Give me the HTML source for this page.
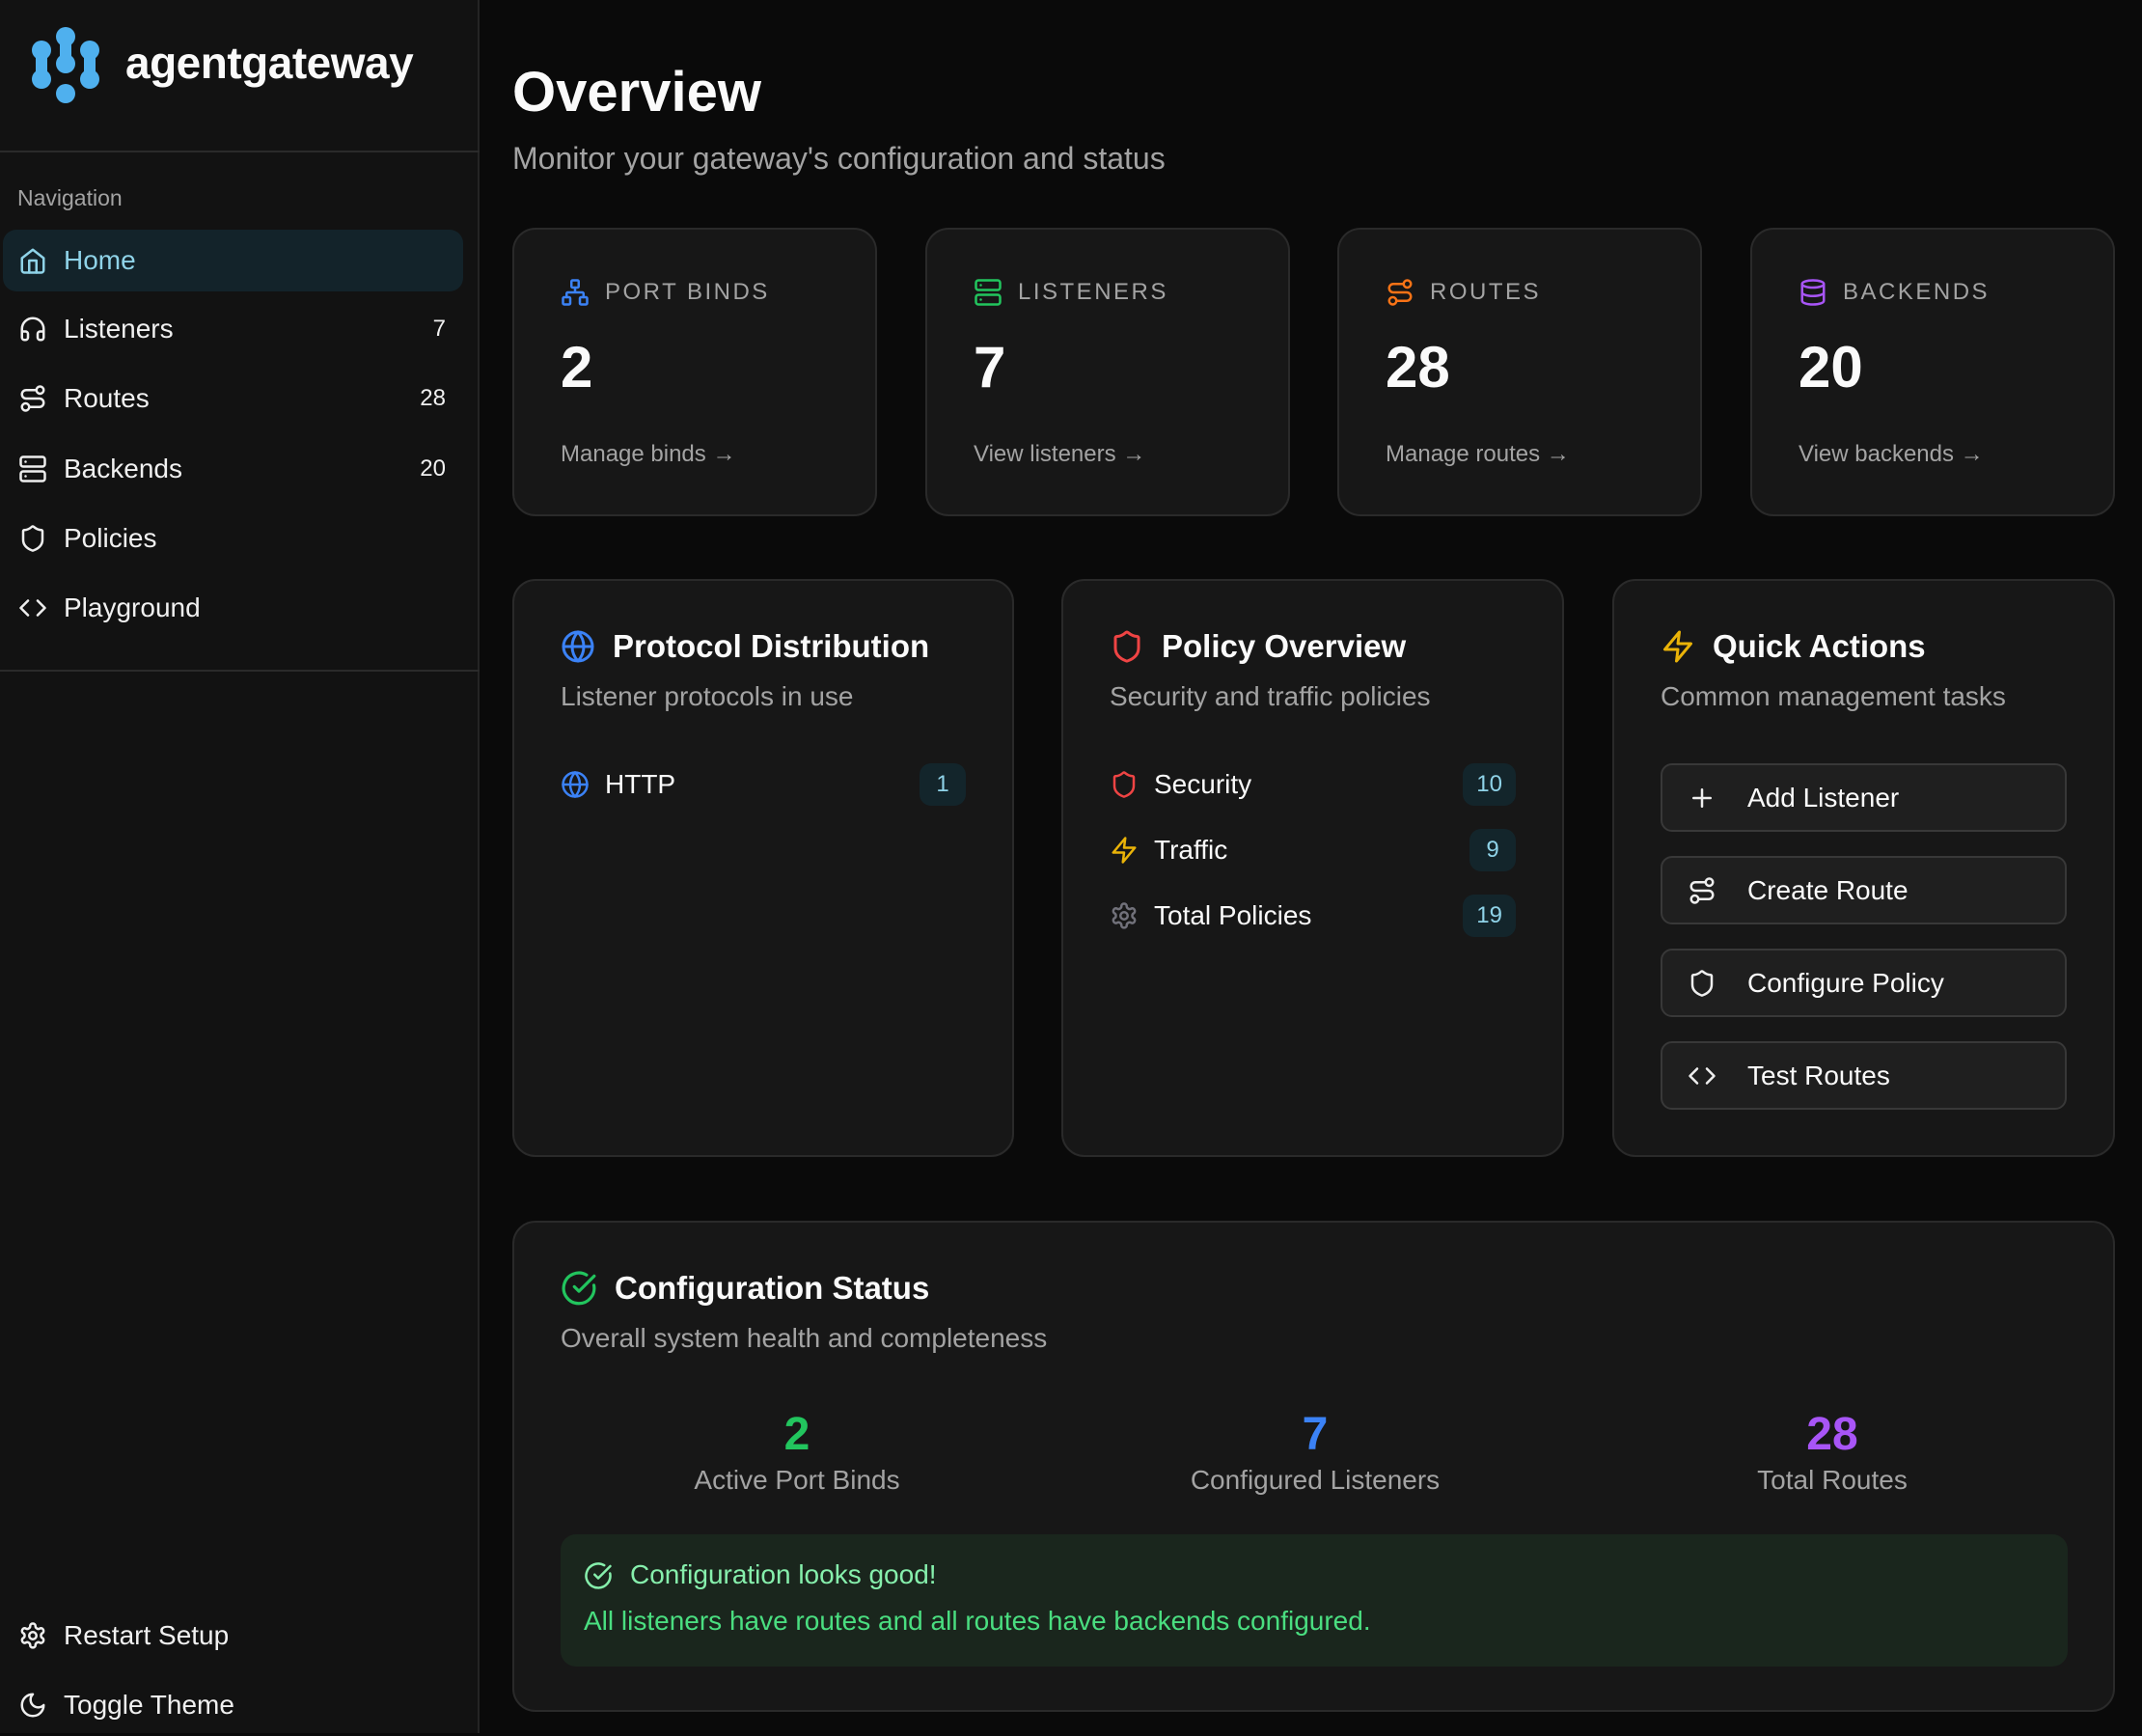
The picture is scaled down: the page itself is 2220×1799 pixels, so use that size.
<!DOCTYPE html>
<html><head><meta charset="utf-8">
<style>
*{box-sizing:border-box;margin:0;padding:0}
body{width:2220px;height:1796px;background:#0a0a0a;font-family:"Liberation Sans",sans-serif;color:#fafafa;position:relative;overflow:hidden}
.abs{position:absolute}
.side{left:0;top:0;width:497px;height:1796px;background:#121212;border-right:2px solid #242424}
.hr{position:absolute;left:0;width:497px;height:2px;background:#2a2a2a}
.nav{position:absolute;left:3px;width:477px;height:64px;display:flex;align-items:center;font-size:28px;color:#f0f0f0}
.nav svg{position:absolute;left:16px}
.nav .t{position:absolute;left:63px}
.nav .c{position:absolute;right:18px;font-size:24px}
.card{position:absolute;background:#171717;border:2px solid #2a2a2a;border-radius:24px}
.lbl{position:absolute;left:48px;top:50px;font-size:24px;letter-spacing:2.5px;color:#a3a3a3;display:flex;align-items:center;gap:16px}
.num{position:absolute;left:48px;top:108px;font-size:60px;font-weight:bold}
.lnk{position:absolute;left:48px;top:219px;font-size:24px;color:#a3a3a3}
.ttl{position:absolute;left:48px;top:49px;font-size:33px;font-weight:bold;display:flex;align-items:center;gap:18px}
.sub{position:absolute;left:48px;top:104px;font-size:28px;color:#a3a3a3}
.row{position:absolute;left:48px;right:48px;height:48px;display:flex;align-items:center;font-size:28px}
.row .t{margin-left:16px}
.badge{position:absolute;right:0;height:44px;min-width:48px;padding:0 14px;border-radius:12px;background:#13252b;color:#8fd3e8;font-size:24px;display:flex;align-items:center;justify-content:center}
.btn{position:absolute;left:48px;width:421px;height:71px;border:2px solid #383838;border-radius:12px;background:#1f1f1f;display:flex;align-items:center;font-size:28px}
.btn svg{position:absolute;left:26px}
.btn .t{position:absolute;left:88px}
svg{fill:none;stroke-width:2;stroke-linecap:round;stroke-linejoin:round}
</style></head><body>

<div class="abs side">
  <svg class="abs" style="left:33px;top:28px" width="72" height="80" viewBox="0 0 72 80">
    <g fill="#4fb0ee" stroke="none">
      <circle cx="10" cy="24" r="10"/><circle cx="10" cy="54" r="10"/><rect x="4" y="24" width="12" height="30"/>
      <circle cx="35" cy="10" r="10"/><circle cx="35" cy="38" r="10"/><rect x="29" y="10" width="12" height="28"/>
      <circle cx="60" cy="24" r="10"/><circle cx="60" cy="54" r="10"/><rect x="54" y="24" width="12" height="30"/>
      <circle cx="35" cy="69" r="10"/>
    </g>
  </svg>
  <div class="abs" style="left:130px;top:38px;font-size:46px;font-weight:bold;letter-spacing:-0.5px">agentgateway</div>
  <div class="hr" style="top:156px"></div>
  <div class="abs" style="left:18px;top:192px;font-size:23px;color:#a3a3a3">Navigation</div>

  <div class="nav" style="top:238px;background:#13232a;border-radius:14px;color:#8fd3e8">
    <svg width="30" height="30" viewBox="0 0 24 24" stroke="#8fd3e8"><path d="M3 10l9-7 9 7v10a2 2 0 0 1-2 2H5a2 2 0 0 1-2-2z"/><path d="M9 22V12h6v10"/></svg>
    <span class="t">Home</span></div>
  <div class="nav" style="top:309px">
    <svg width="30" height="30" viewBox="0 0 24 24" stroke="#eee"><path d="M3 14h3a2 2 0 0 1 2 2v3a2 2 0 0 1-2 2H5a2 2 0 0 1-2-2v-7a9 9 0 0 1 18 0v7a2 2 0 0 1-2 2h-1a2 2 0 0 1-2-2v-3a2 2 0 0 1 2-2h3"/></svg>
    <span class="t">Listeners</span><span class="c">7</span></div>
  <div class="nav" style="top:381px">
    <svg width="30" height="30" viewBox="0 0 24 24" stroke="#eee"><circle cx="6" cy="19" r="3"/><path d="M9 19h8.5a3.5 3.5 0 0 0 0-7h-11a3.5 3.5 0 0 1 0-7H15"/><circle cx="18" cy="5" r="3"/></svg>
    <span class="t">Routes</span><span class="c">28</span></div>
  <div class="nav" style="top:454px">
    <svg width="30" height="30" viewBox="0 0 24 24" stroke="#eee"><rect x="2" y="2" width="20" height="8" rx="2"/><rect x="2" y="14" width="20" height="8" rx="2"/><path d="M6 6h.01M6 18h.01"/></svg>
    <span class="t">Backends</span><span class="c">20</span></div>
  <div class="nav" style="top:526px">
    <svg width="30" height="30" viewBox="0 0 24 24" stroke="#eee"><path d="M20 13c0 5-3.5 7.5-7.7 9a1 1 0 0 1-.7 0C7.5 20.5 4 18 4 13V6a1 1 0 0 1 1-1c2 0 4.5-1.2 6.2-2.7a1.2 1.2 0 0 1 1.5 0C14.5 3.8 17 5 19 5a1 1 0 0 1 1 1z"/></svg>
    <span class="t">Policies</span></div>
  <div class="nav" style="top:598px">
    <svg width="30" height="30" viewBox="0 0 24 24" stroke="#eee"><path d="M16 18l6-6-6-6M8 6l-6 6 6 6"/></svg>
    <span class="t">Playground</span></div>
  <div class="hr" style="top:694px"></div>

  <div class="nav" style="top:1663px">
    <svg width="30" height="30" viewBox="0 0 24 24" stroke="#eee"><circle cx="12" cy="12" r="3"/><path d="M12.2 2h-.4a2 2 0 0 0-2 2v.2a2 2 0 0 1-1 1.7l-.4.3a2 2 0 0 1-2 0l-.2-.1a2 2 0 0 0-2.7.7l-.2.4a2 2 0 0 0 .7 2.7l.2.1a2 2 0 0 1 1 1.7v.5a2 2 0 0 1-1 1.7l-.2.1a2 2 0 0 0-.7 2.7l.2.4a2 2 0 0 0 2.7.7l.2-.1a2 2 0 0 1 2 0l.4.3a2 2 0 0 1 1 1.7v.2a2 2 0 0 0 2 2h.4a2 2 0 0 0 2-2v-.2a2 2 0 0 1 1-1.7l.4-.3a2 2 0 0 1 2 0l.2.1a2 2 0 0 0 2.7-.7l.2-.4a2 2 0 0 0-.7-2.7l-.2-.1a2 2 0 0 1-1-1.7v-.5a2 2 0 0 1 1-1.7l.2-.1a2 2 0 0 0 .7-2.7l-.2-.4a2 2 0 0 0-2.7-.7l-.2.1a2 2 0 0 1-2 0l-.4-.3a2 2 0 0 1-1-1.7V4a2 2 0 0 0-2-2z"/></svg>
    <span class="t">Restart Setup</span></div>
  <div class="nav" style="top:1735px">
    <svg width="30" height="30" viewBox="0 0 24 24" stroke="#eee"><path d="M12 3a6 6 0 0 0 9 9 9 9 0 1 1-9-9z"/></svg>
    <span class="t">Toggle Theme</span></div>
</div>

<div class="abs" style="left:531px;top:62px;font-size:58px;font-weight:bold">Overview</div>
<div class="abs" style="left:531px;top:146px;font-size:32px;color:#a3a3a3">Monitor your gateway's configuration and status</div>

<!-- stat cards -->
<div class="card" style="left:531px;top:236px;width:378px;height:299px">
  <div class="lbl"><svg width="30" height="30" viewBox="0 0 24 24" stroke="#3b82f6"><rect x="16" y="16" width="6" height="6" rx="1"/><rect x="2" y="16" width="6" height="6" rx="1"/><rect x="9" y="2" width="6" height="6" rx="1"/><path d="M5 16v-3a1 1 0 0 1 1-1h12a1 1 0 0 1 1 1v3M12 12V8"/></svg>PORT BINDS</div>
  <div class="num">2</div><div class="lnk">Manage binds →</div></div>
<div class="card" style="left:959px;top:236px;width:378px;height:299px">
  <div class="lbl"><svg width="30" height="30" viewBox="0 0 24 24" stroke="#22c55e"><rect x="2" y="2" width="20" height="8" rx="2"/><rect x="2" y="14" width="20" height="8" rx="2"/><path d="M6 6h.01M6 18h.01"/></svg>LISTENERS</div>
  <div class="num">7</div><div class="lnk">View listeners →</div></div>
<div class="card" style="left:1386px;top:236px;width:378px;height:299px">
  <div class="lbl"><svg width="30" height="30" viewBox="0 0 24 24" stroke="#f97316"><circle cx="6" cy="19" r="3"/><path d="M9 19h8.5a3.5 3.5 0 0 0 0-7h-11a3.5 3.5 0 0 1 0-7H15"/><circle cx="18" cy="5" r="3"/></svg>ROUTES</div>
  <div class="num">28</div><div class="lnk">Manage routes →</div></div>
<div class="card" style="left:1814px;top:236px;width:378px;height:299px">
  <div class="lbl"><svg width="30" height="30" viewBox="0 0 24 24" stroke="#a855f7"><ellipse cx="12" cy="5" rx="9" ry="3"/><path d="M3 5v14a9 3 0 0 0 18 0V5"/><path d="M3 12a9 3 0 0 0 18 0"/></svg>BACKENDS</div>
  <div class="num">20</div><div class="lnk">View backends →</div></div>

<!-- middle cards -->
<div class="card" style="left:531px;top:600px;width:520px;height:599px">
  <div class="ttl"><svg width="36" height="36" viewBox="0 0 24 24" stroke="#3b82f6"><circle cx="12" cy="12" r="10"/><path d="M12 2a14.5 14.5 0 0 0 0 20 14.5 14.5 0 0 0 0-20M2 12h20"/></svg>Protocol Distribution</div>
  <div class="sub">Listener protocols in use</div>
  <div class="row" style="top:187px"><svg width="30" height="30" viewBox="0 0 24 24" stroke="#3b82f6"><circle cx="12" cy="12" r="10"/><path d="M12 2a14.5 14.5 0 0 0 0 20 14.5 14.5 0 0 0 0-20M2 12h20"/></svg><span class="t">HTTP</span><span class="badge">1</span></div>
</div>
<div class="card" style="left:1100px;top:600px;width:521px;height:599px">
  <div class="ttl"><svg width="36" height="36" viewBox="0 0 24 24" stroke="#ef4444"><path d="M20 13c0 5-3.5 7.5-7.7 9a1 1 0 0 1-.7 0C7.5 20.5 4 18 4 13V6a1 1 0 0 1 1-1c2 0 4.5-1.2 6.2-2.7a1.2 1.2 0 0 1 1.5 0C14.5 3.8 17 5 19 5a1 1 0 0 1 1 1z"/></svg>Policy Overview</div>
  <div class="sub">Security and traffic policies</div>
  <div class="row" style="top:187px"><svg width="30" height="30" viewBox="0 0 24 24" stroke="#ef4444"><path d="M20 13c0 5-3.5 7.5-7.7 9a1 1 0 0 1-.7 0C7.5 20.5 4 18 4 13V6a1 1 0 0 1 1-1c2 0 4.5-1.2 6.2-2.7a1.2 1.2 0 0 1 1.5 0C14.5 3.8 17 5 19 5a1 1 0 0 1 1 1z"/></svg><span class="t">Security</span><span class="badge">10</span></div>
  <div class="row" style="top:255px"><svg width="30" height="30" viewBox="0 0 24 24" stroke="#eab308"><path d="M13 2L3 14h9l-1 8 10-12h-9l1-8z"/></svg><span class="t">Traffic</span><span class="badge">9</span></div>
  <div class="row" style="top:323px"><svg width="30" height="30" viewBox="0 0 24 24" stroke="#71717a"><circle cx="12" cy="12" r="3"/><path d="M12.2 2h-.4a2 2 0 0 0-2 2v.2a2 2 0 0 1-1 1.7l-.4.3a2 2 0 0 1-2 0l-.2-.1a2 2 0 0 0-2.7.7l-.2.4a2 2 0 0 0 .7 2.7l.2.1a2 2 0 0 1 1 1.7v.5a2 2 0 0 1-1 1.7l-.2.1a2 2 0 0 0-.7 2.7l.2.4a2 2 0 0 0 2.7.7l.2-.1a2 2 0 0 1 2 0l.4.3a2 2 0 0 1 1 1.7v.2a2 2 0 0 0 2 2h.4a2 2 0 0 0 2-2v-.2a2 2 0 0 1 1-1.7l.4-.3a2 2 0 0 1 2 0l.2.1a2 2 0 0 0 2.7-.7l.2-.4a2 2 0 0 0-.7-2.7l-.2-.1a2 2 0 0 1-1-1.7v-.5a2 2 0 0 1 1-1.7l.2-.1a2 2 0 0 0 .7-2.7l-.2-.4a2 2 0 0 0-2.7-.7l-.2.1a2 2 0 0 1-2 0l-.4-.3a2 2 0 0 1-1-1.7V4a2 2 0 0 0-2-2z"/></svg><span class="t">Total Policies</span><span class="badge">19</span></div>
</div>
<div class="card" style="left:1671px;top:600px;width:521px;height:599px">
  <div class="ttl"><svg width="36" height="36" viewBox="0 0 24 24" stroke="#eab308"><path d="M13 2L3 14h9l-1 8 10-12h-9l1-8z"/></svg>Quick Actions</div>
  <div class="sub">Common management tasks</div>
  <div class="btn" style="top:189px"><svg width="30" height="30" viewBox="0 0 24 24" stroke="#eee"><path d="M5 12h14M12 5v14"/></svg><span class="t">Add Listener</span></div>
  <div class="btn" style="top:285px"><svg width="30" height="30" viewBox="0 0 24 24" stroke="#eee"><circle cx="6" cy="19" r="3"/><path d="M9 19h8.5a3.5 3.5 0 0 0 0-7h-11a3.5 3.5 0 0 1 0-7H15"/><circle cx="18" cy="5" r="3"/></svg><span class="t">Create Route</span></div>
  <div class="btn" style="top:381px"><svg width="30" height="30" viewBox="0 0 24 24" stroke="#eee"><path d="M20 13c0 5-3.5 7.5-7.7 9a1 1 0 0 1-.7 0C7.5 20.5 4 18 4 13V6a1 1 0 0 1 1-1c2 0 4.5-1.2 6.2-2.7a1.2 1.2 0 0 1 1.5 0C14.5 3.8 17 5 19 5a1 1 0 0 1 1 1z"/></svg><span class="t">Configure Policy</span></div>
  <div class="btn" style="top:477px"><svg width="30" height="30" viewBox="0 0 24 24" stroke="#eee"><path d="M16 18l6-6-6-6M8 6l-6 6 6 6"/></svg><span class="t">Test Routes</span></div>
</div>

<!-- config status -->
<div class="card" style="left:531px;top:1265px;width:1661px;height:509px">
  <div class="ttl"><svg width="38" height="38" viewBox="0 0 24 24" stroke="#22c55e"><path d="M21.8 10A10 10 0 1 1 17 3.3"/><path d="M9 11l3 3L22 4"/></svg>Configuration Status</div>
  <div class="sub">Overall system health and completeness</div>
  <div class="abs" style="left:93px;width:400px;top:192px;text-align:center"><div style="font-size:48px;font-weight:bold;color:#22c55e">2</div><div style="font-size:28px;color:#a3a3a3;margin-top:4px">Active Port Binds</div></div>
  <div class="abs" style="left:630px;width:400px;top:192px;text-align:center"><div style="font-size:48px;font-weight:bold;color:#3b82f6">7</div><div style="font-size:28px;color:#a3a3a3;margin-top:4px">Configured Listeners</div></div>
  <div class="abs" style="left:1166px;width:400px;top:192px;text-align:center"><div style="font-size:48px;font-weight:bold;color:#a855f7">28</div><div style="font-size:28px;color:#a3a3a3;margin-top:4px">Total Routes</div></div>
  <div class="abs" style="left:48px;top:323px;width:1562px;height:137px;background:#1a261d;border-radius:16px">
    <svg class="abs" style="left:24px;top:28px" width="30" height="30" viewBox="0 0 24 24" stroke="#86efac"><path d="M21.8 10A10 10 0 1 1 17 3.3"/><path d="M9 11l3 3L22 4"/></svg>
    <div class="abs" style="left:72px;top:26px;font-size:28px;color:#86efac">Configuration looks good!</div>
    <div class="abs" style="left:24px;top:74px;font-size:28px;color:#4ade80">All listeners have routes and all routes have backends configured.</div>
  </div>
</div>
</body></html>
